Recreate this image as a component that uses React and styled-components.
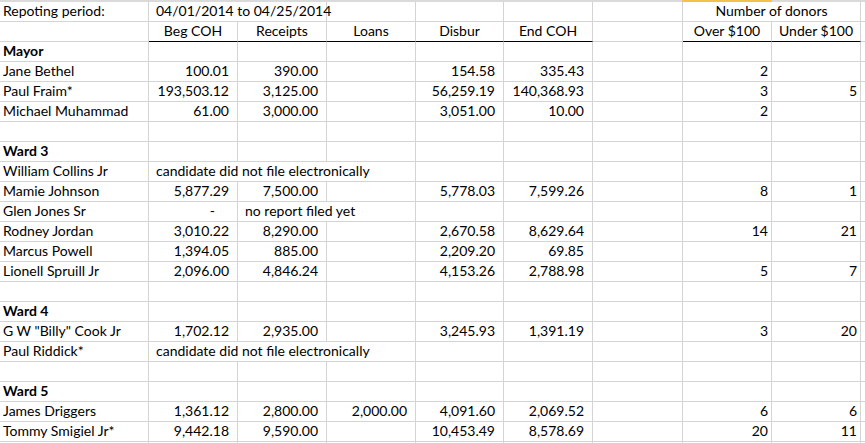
import React from "react";
import styled, { createGlobalStyle } from "styled-components";

const Global = createGlobalStyle`
  html, body { margin: 0; padding: 0; background: #ffffff; overflow: hidden; }
  body { font-family: "Lato", "Liberation Sans", sans-serif; color: #000; }
`;

const Page = styled.div`
  width: 865px;
  height: 443px;
  overflow: hidden;
`;

const Sheet = styled.div`
  display: grid;
  grid-template-columns: 149px 89px 89px 89px 88px 89px 90px 89px 89px 1fr;
  grid-auto-rows: 20px;
  width: 865px;
  border-top: 2px solid #dadada;
  box-sizing: border-box;
  position: relative;
`;

const SelectionMark = styled.div`
  position: absolute;
  top: -2px;
  left: 682px;
  width: 90px;
  height: 2px;
  background: #f2c24a;
`;

const Cell = styled.div`
  box-sizing: border-box;
  grid-column: span ${(p) => p.$span || 1};
  border-right: 1px solid #d4d4d4;
  border-bottom: 1px solid ${(p) => (p.$rule ? "#000" : "#d4d4d4")};
  display: flex;
  align-items: flex-end;
  justify-content: ${(p) =>
    p.$align === "right" ? "flex-end" : p.$align === "center" ? "center" : "flex-start"};
  padding: 0 ${(p) => p.$padR ?? 3}px 1px ${(p) => p.$padL ?? 3}px;
  font-size: 14px;
  line-height: 18px;
  font-weight: ${(p) => (p.$bold ? 700 : 400)};
  white-space: nowrap;
  overflow: visible;
`;

const money = (v) => ({ t: v, align: "right", padR: 8 });
const count = (v) => ({ t: v, align: "right", padR: 3 });
const head = (v, rule = true) => ({ t: v, align: "center", rule });
const note = (v, span) => ({ t: v, span, padL: 7 });

const E = { t: "" };

const candidate = (name, b, c, d, e, f, h, i) => [
  { t: name },
  b ? money(b) : E,
  c ? money(c) : E,
  d ? money(d) : E,
  e ? money(e) : E,
  f ? money(f) : E,
  E,
  h ? count(h) : E,
  i ? count(i) : E,
  E,
];

const blank = () => Array.from({ length: 10 }, () => E);
const section = (name) => [{ t: name, bold: true }, E, E, E, E, E, E, E, E, E];

const rows = [
  [
    { t: "Repoting period:" },
    note("04/01/2014 to 04/25/2014", 2),
    E,
    E,
    E,
    E,
    { t: "Number of donors", align: "center", span: 2 },
    E,
  ],
  [
    E,
    head("Beg COH"),
    head("Receipts"),
    head("Loans"),
    head("Disbur"),
    head("End COH"),
    E,
    head("Over $100"),
    head("Under $100"),
    E,
  ],
  section("Mayor"),
  candidate("Jane Bethel", "100.01", "390.00", "", "154.58", "335.43", "2", ""),
  candidate("Paul Fraim*", "193,503.12", "3,125.00", "", "56,259.19", "140,368.93", "3", "5"),
  candidate("Michael Muhammad", "61.00", "3,000.00", "", "3,051.00", "10.00", "2", ""),
  blank(),
  section("Ward 3"),
  [{ t: "William Collins Jr" }, note("candidate did not file electronically", 3), E, E, E, E, E, E],
  candidate("Mamie Johnson", "5,877.29", "7,500.00", "", "5,778.03", "7,599.26", "8", "1"),
  [
    { t: "Glen Jones Sr" },
    { t: "-", align: "right", padR: 22 },
    note("no report filed yet", 2),
    E,
    E,
    E,
    E,
    E,
    E,
  ],
  candidate("Rodney Jordan", "3,010.22", "8,290.00", "", "2,670.58", "8,629.64", "14", "21"),
  candidate("Marcus Powell", "1,394.05", "885.00", "", "2,209.20", "69.85", "", ""),
  candidate("Lionell Spruill Jr", "2,096.00", "4,846.24", "", "4,153.26", "2,788.98", "5", "7"),
  blank(),
  section("Ward 4"),
  candidate('G W "Billy" Cook Jr', "1,702.12", "2,935.00", "", "3,245.93", "1,391.19", "3", "20"),
  [{ t: "Paul Riddick*" }, note("candidate did not file electronically", 3), E, E, E, E, E, E],
  blank(),
  section("Ward 5"),
  candidate("James Driggers", "1,361.12", "2,800.00", "2,000.00", "4,091.60", "2,069.52", "6", "6"),
  candidate("Tommy Smigiel Jr*", "9,442.18", "9,590.00", "", "10,453.49", "8,578.69", "20", "11"),
  blank(),
];

export default function App() {
  return (
    <Page>
      <Global />
      <Sheet>
        <SelectionMark />
        {rows.map((row, r) =>
          row.map((c, i) => (
            <Cell
              key={`${r}-${i}`}
              $span={c.span}
              $align={c.align}
              $bold={c.bold}
              $rule={c.rule}
              $padL={c.padL}
              $padR={c.padR}
            >
              {c.t}
            </Cell>
          ))
        )}
      </Sheet>
    </Page>
  );
}
